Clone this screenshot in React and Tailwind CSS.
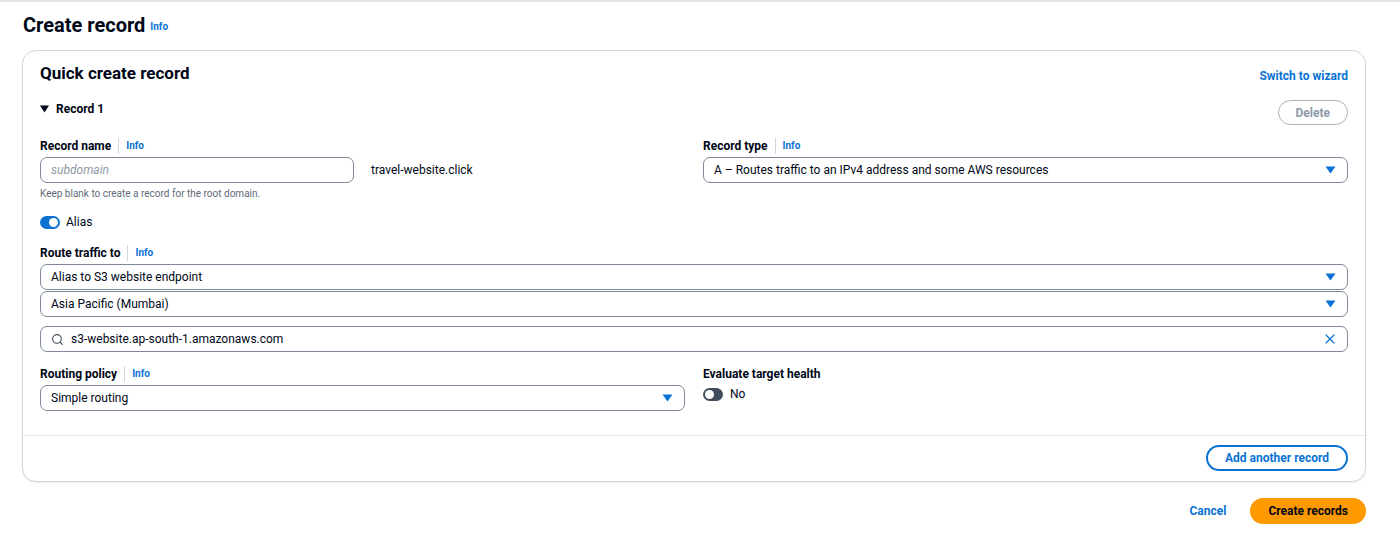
import { Search, X } from 'lucide-react'

const font = { fontFamily: 'Roboto, "Liberation Sans", sans-serif' }

function Caret() {
  return (
    <svg width="11" height="8" viewBox="0 0 11 8" className="shrink-0">
      <path d="M0.5 0.5 H10.5 L5.5 7.5 Z" fill="#0972d3" />
    </svg>
  )
}

function Label({ children, info = true }) {
  return (
    <div className="flex items-center h-[16px] mb-[3px]">
      <span className="text-[12px] font-bold text-[#000716] leading-none">{children}</span>
      {info && (
        <>
          <span className="mx-[7px] h-[16px] w-px bg-[#d1d5db]" />
          <span className="text-[10px] font-bold text-[#0972d3] leading-none">Info</span>
        </>
      )}
    </div>
  )
}

function Select({ value, className = '' }) {
  return (
    <div
      className={`flex items-center justify-between h-[26px] pl-[10px] pr-[11px] border border-[#7d8998] rounded-[7px] bg-white ${className}`}
    >
      <span className="text-[12px] text-[#000716]">{value}</span>
      <Caret />
    </div>
  )
}

function Toggle({ on }) {
  return (
    <div
      className={`relative w-[20px] h-[13px] rounded-full ${on ? 'bg-[#0972d3]' : 'bg-[#414d5c]'}`}
    >
      <div
        className={`absolute top-[2px] w-[9px] h-[9px] rounded-full bg-white ${on ? 'left-[9px]' : 'left-[2px]'}`}
      />
    </div>
  )
}

export default function App() {
  return (
    <div className="w-[1400px] h-[538px] bg-white border-t-2 border-[#e4e4e4]" style={font}>
      <div className="pl-[23px] pr-[34px] pt-[7px]">
        <div className="flex items-end gap-[5px] h-[26px]">
          <h1 className="text-[20px] font-bold text-[#000716] leading-none">Create record</h1>
          <span className="text-[10px] font-bold text-[#0972d3] mb-[1px]">Info</span>
        </div>

        {/* Card */}
        <div className="mt-[15px] -ml-px border border-[#d5d5d8] rounded-[14px] bg-white shadow-[0_1px_2px_rgba(0,7,22,0.08)]">
          <div className="px-[17px] pt-[12px] pb-[24px]">
            <div className="flex items-center justify-between h-[22px]">
              <h2 className="text-[17px] font-bold text-[#000716]">Quick create record</h2>
              <span className="text-[12px] font-bold text-[#0972d3] mt-[3px]">Switch to wizard</span>
            </div>

            <div className="flex items-start justify-between mt-[15px]">
              <div className="flex items-center gap-[7px] h-[14px] mt-[2px]">
                <svg width="9" height="8" viewBox="0 0 9 8">
                  <path d="M0 0.5 H9 L4.5 7.5 Z" fill="#000716" />
                </svg>
                <span className="text-[12px] font-bold text-[#000716]">Record 1</span>
              </div>
              <div className="h-[25px] px-[17px] flex items-center border border-[#a8b2be] rounded-full text-[12px] font-bold text-[#8d99a8]">
                Delete
              </div>
            </div>

            <div className="grid grid-cols-2 gap-x-[18px] mt-[13px]">
              <div>
                <Label>Record name</Label>
                <div className="flex items-center">
                  <div className="w-[314px] h-[26px] flex items-center px-[10px] border border-[#7d8998] rounded-[7px]">
                    <span className="text-[12px] italic text-[#8d99a8]">subdomain</span>
                  </div>
                  <span className="ml-[17px] text-[12px] text-[#000716]">travel-website.click</span>
                </div>
                <p className="mt-[3px] text-[10px] text-[#5f6b7a]">Keep blank to create a record for the root domain.</p>
                <div className="flex items-center gap-[6px] mt-[12px]">
                  <Toggle on />
                  <span className="text-[12px] text-[#000716]">Alias</span>
                </div>
              </div>
              <div>
                <Label>Record type</Label>
                <Select value="A – Routes traffic to an IPv4 address and some AWS resources" />
              </div>
            </div>

            <div className="mt-[14px]">
              <Label>Route traffic to</Label>
              <Select value="Alias to S3 website endpoint" />
              <Select value="Asia Pacific (Mumbai)" className="mt-px" />
              <div className="mt-[9px] flex items-center h-[26px] pl-[10px] pr-[9px] border border-[#7d8998] rounded-[7px]">
                <Search size={13} strokeWidth={2} className="text-[#414d5c]" />
                <span className="ml-[7px] text-[12px] text-[#000716] flex-1">s3-website.ap-south-1.amazonaws.com</span>
                <X size={16} strokeWidth={1.75} className="text-[#0972d3]" />
              </div>
            </div>

            <div className="grid grid-cols-2 gap-x-[18px] mt-[14px]">
              <div>
                <Label>Routing policy</Label>
                <Select value="Simple routing" />
              </div>
              <div>
                <Label info={false}>Evaluate target health</Label>
                <div className="flex items-center gap-[7px] mt-[1px]">
                  <Toggle on={false} />
                  <span className="text-[12px] text-[#000716]">No</span>
                </div>
              </div>
            </div>
          </div>

          <div className="border-t border-[#e9ebed] px-[17px] pt-[9px] pb-[10px] flex justify-end">
            <div className="h-[26px] px-[17px] flex items-center border-2 border-[#0972d3] rounded-full text-[12px] font-bold text-[#0972d3]">
              Add another record
            </div>
          </div>
        </div>

        <div className="flex justify-end items-center gap-[24px] mt-[16px]">
          <span className="text-[12px] font-bold text-[#0972d3]">Cancel</span>
          <div className="h-[26px] px-[18px] flex items-center rounded-full bg-[#ff9900] text-[12px] font-bold text-[#000716]">
            Create records
          </div>
        </div>
      </div>
    </div>
  )
}
